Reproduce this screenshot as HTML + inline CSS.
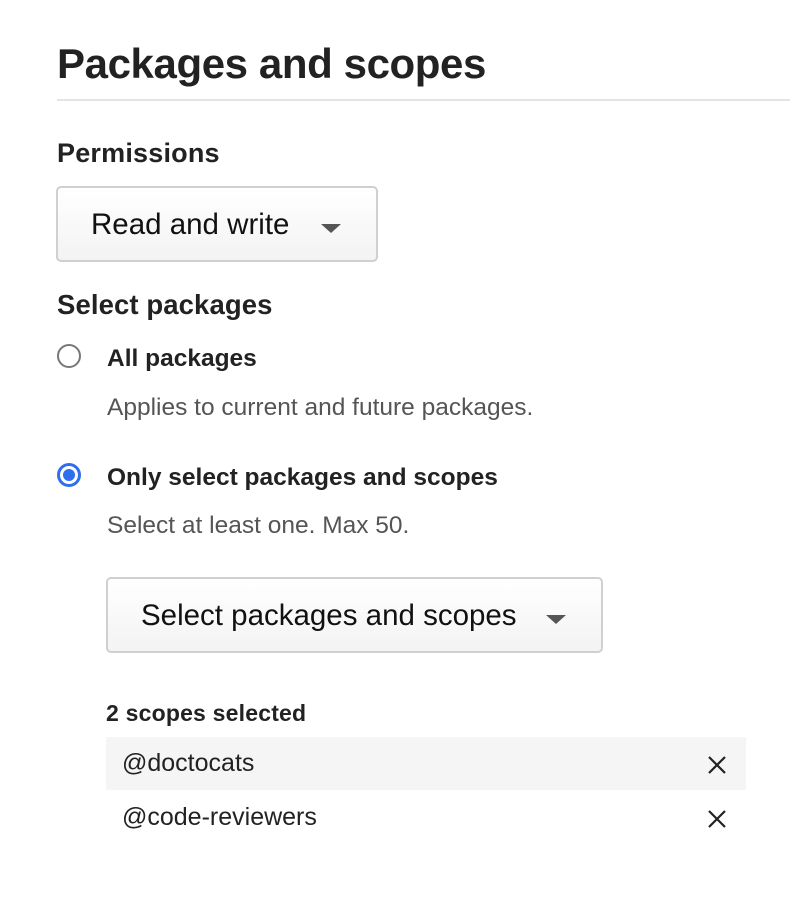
<!DOCTYPE html>
<html><head><meta charset="utf-8"><style>
body{margin:0;width:790px;height:900px;background:#fff;font-family:"Liberation Sans",sans-serif;color:#1a1a1a;position:relative;overflow:hidden}
.a{position:absolute;white-space:nowrap;line-height:1}
.btn{position:absolute;border:2px solid #d0d0d0;border-radius:5px;background:linear-gradient(#fff,#f3f3f3);box-sizing:border-box}
.caret{position:absolute;width:0;height:0;border-left:10px solid transparent;border-right:10px solid transparent;border-top:9px solid #555}
.x{position:absolute;width:20px;height:20px}
</style></head><body>
<div class="a" style="left:57px;top:43px;font-size:42px;font-weight:bold;letter-spacing:-0.4px;color:#222">Packages and scopes</div>
<div style="position:absolute;left:57px;top:99px;width:733px;height:2px;background:#e4e4e4"></div>
<div class="a" style="left:57px;top:140px;font-size:27px;font-weight:bold;letter-spacing:0.2px;color:#222">Permissions</div>
<div class="btn" style="left:56px;top:186px;width:322px;height:76px"></div>
<div class="a" style="left:91px;top:210px;font-size:29.5px;color:#111">Read and write</div>
<div class="caret" style="left:321px;top:224px"></div>
<div class="a" style="left:57px;top:291px;font-size:27.5px;font-weight:bold;letter-spacing:0.1px;color:#222">Select packages</div>
<div style="position:absolute;left:57px;top:344px;width:24px;height:24px;border:2px solid #777;border-radius:50%;box-sizing:border-box"></div>
<div class="a" style="left:107px;top:347px;font-size:24.5px;font-weight:bold;color:#222">All packages</div>
<div class="a" style="left:107px;top:396px;font-size:24.5px;color:#555">Applies to current and future packages.</div>
<div style="position:absolute;left:57px;top:463px;width:24px;height:24px;border:3px solid #2f6fed;border-radius:50%;box-sizing:border-box;background:#fff"><div style="position:absolute;left:3px;top:3px;width:12px;height:12px;border-radius:50%;background:#2f6fed"></div></div>
<div class="a" style="left:107px;top:466px;font-size:24.5px;font-weight:bold;color:#222">Only select packages and scopes</div>
<div class="a" style="left:107px;top:514px;font-size:24.5px;color:#555">Select at least one. Max 50.</div>
<div class="btn" style="left:106px;top:577px;width:497px;height:76px"></div>
<div class="a" style="left:141px;top:601px;font-size:29.5px;color:#111">Select packages and scopes</div>
<div class="caret" style="left:546px;top:615px"></div>
<div class="a" style="left:106px;top:702px;font-size:23px;font-weight:bold;letter-spacing:0.2px;color:#222">2 scopes selected</div>
<div style="position:absolute;left:106px;top:737px;width:640px;height:53px;background:#f5f5f5"></div>
<div class="a" style="left:122px;top:751px;font-size:25px;color:#222">@doctocats</div>
<svg class="x" style="left:707px;top:755px" viewBox="0 0 20 20"><path d="M2 2L18 18M18 2L2 18" stroke="#222" stroke-width="2.2"/></svg>
<div class="a" style="left:122px;top:805px;font-size:25px;color:#222">@code-reviewers</div>
<svg class="x" style="left:707px;top:809px" viewBox="0 0 20 20"><path d="M2 2L18 18M18 2L2 18" stroke="#222" stroke-width="2.2"/></svg>
</body></html>
